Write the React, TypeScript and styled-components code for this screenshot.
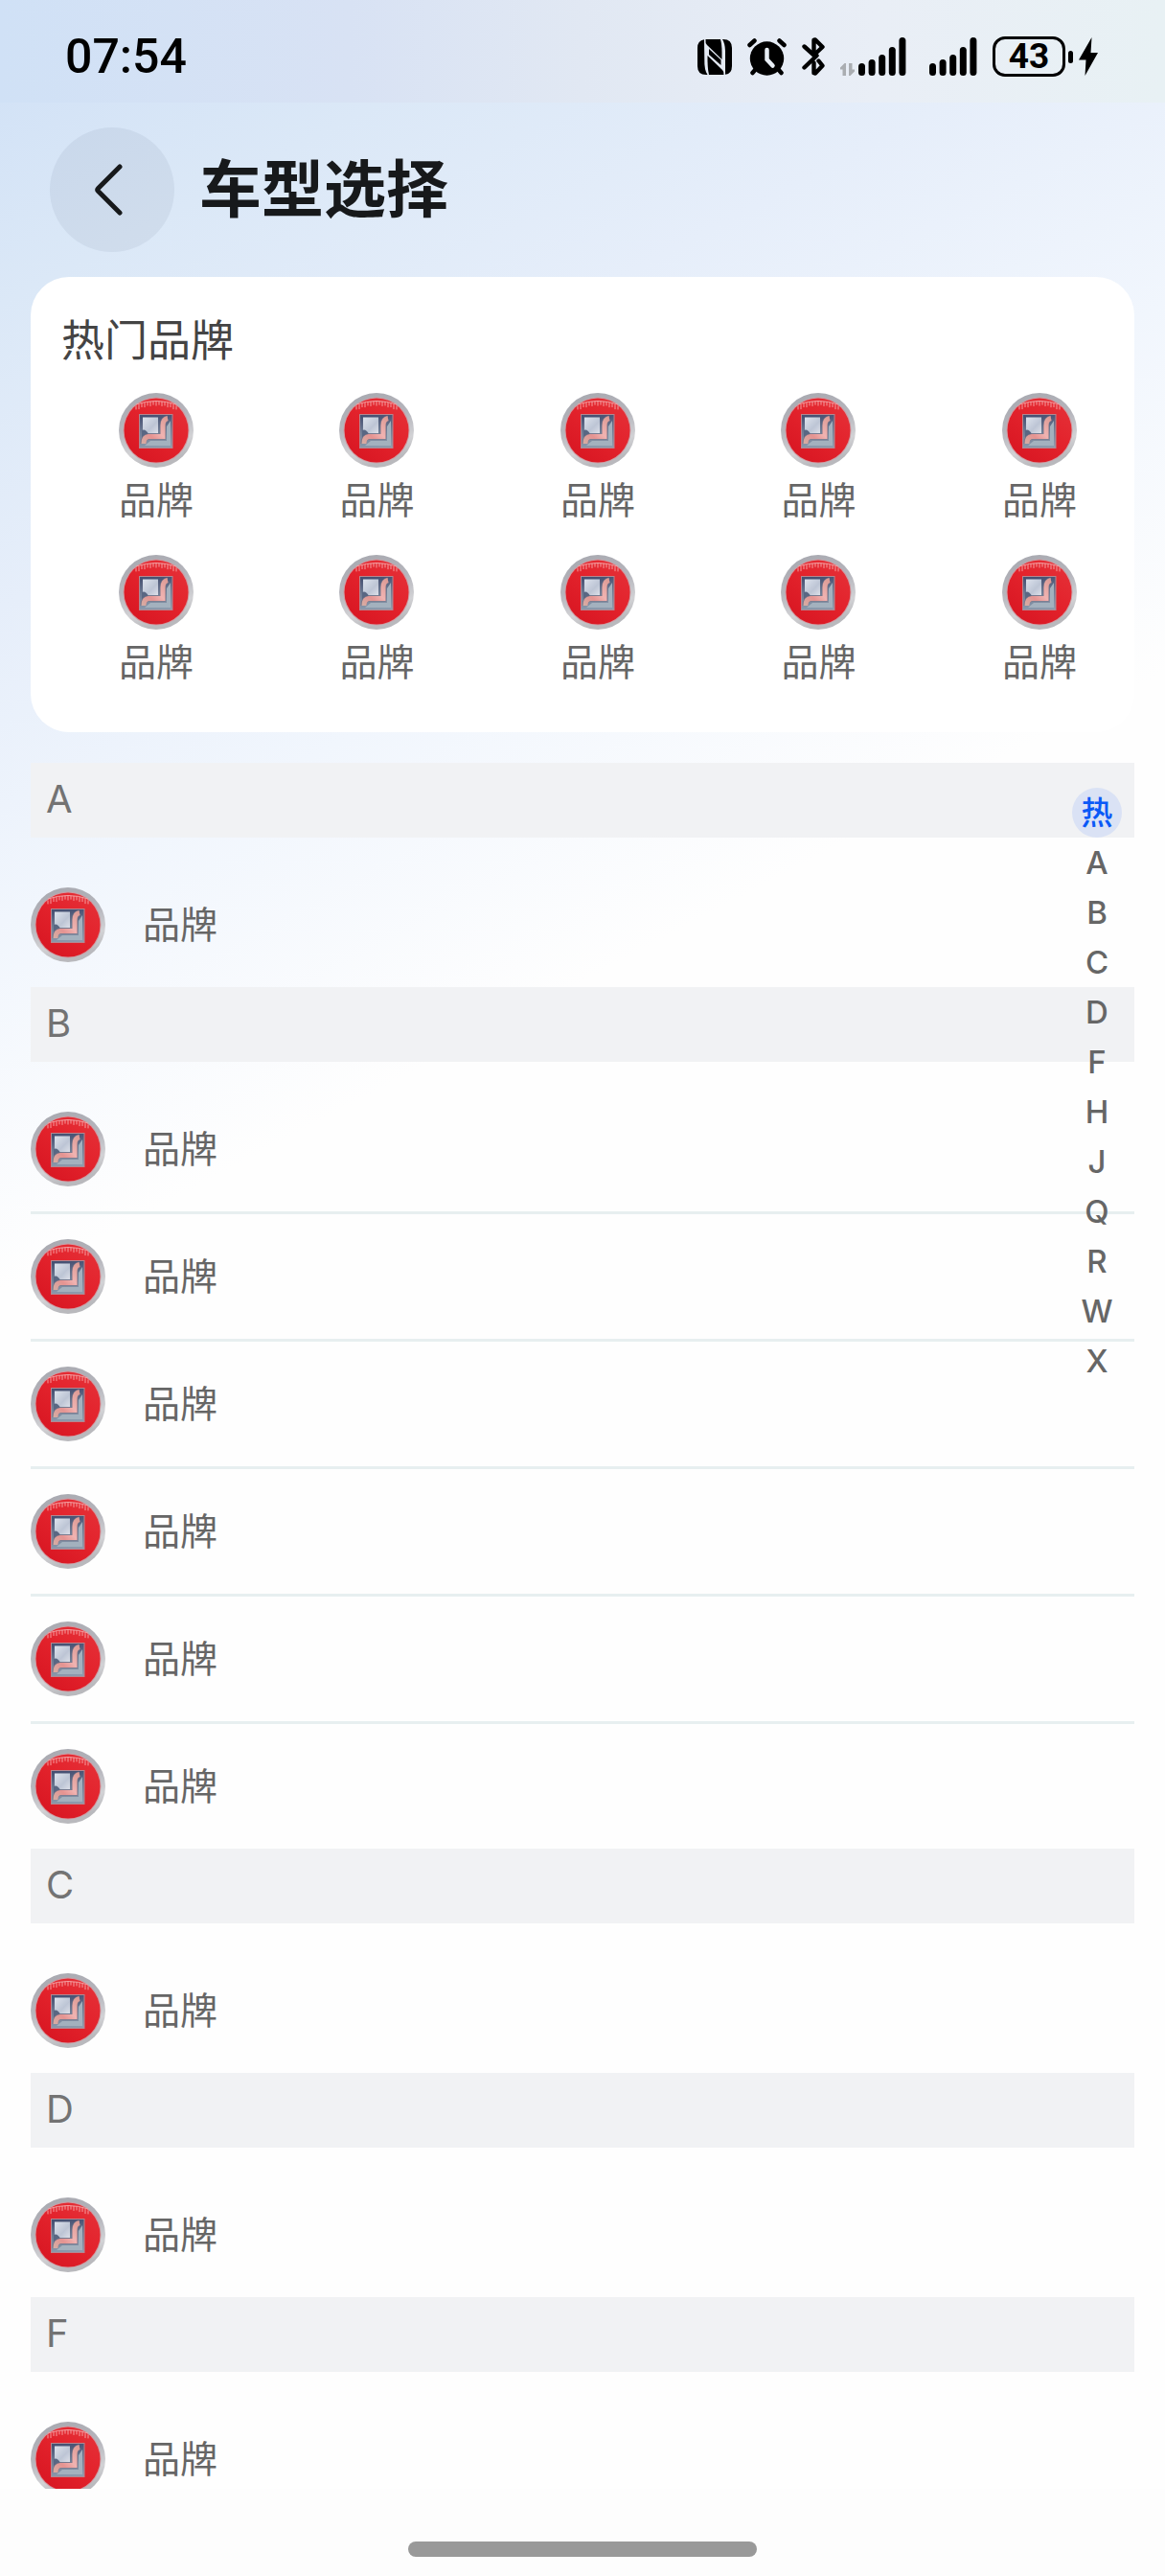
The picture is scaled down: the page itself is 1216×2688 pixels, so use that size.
import React, { useId } from "react";
import styled, { createGlobalStyle } from "styled-components";

const sans = `"Noto Sans CJK SC", "Noto Sans", sans-serif`;
const latin = `Inter, "Noto Sans CJK SC", sans-serif`;
const digits = `Roboto, "Noto Sans CJK SC", sans-serif`;

const GlobalStyle = createGlobalStyle`
  *, *::before, *::after { box-sizing: border-box; }
  body { margin: 0; font-family: ${sans}; background: #fefefe; }
  button { font: inherit; color: inherit; border: 0; padding: 0; background: none; cursor: pointer; }
  h1, h2, ul { margin: 0; padding: 0; font-weight: 400; }
  ul { list-style: none; }
  svg { display: block; flex: none; }
`;

const Screen = styled.div`
  display: flex;
  flex-direction: column;
  height: 100vh;
  overflow: hidden;
  background: linear-gradient(152deg, #cfe0f6 0, #dbe8f7 280px, #e6eefa 560px, #f1f6fd 850px, #fefefe 1190px);
`;

const StatusBar = styled.div`
  flex: none;
  display: flex;
  align-items: center;
  justify-content: space-between;
  height: 107px;
  padding: 11px 70px 0 68px;
  color: #000;
  background: linear-gradient(90deg, #d0e1f6 0, #d8e2f4 30%, #e1e8f3 50%, #e9eef6 75%, #e8f1f4 100%);
`;

const Clock = styled.time`
  font-family: ${digits};
  font-size: 50px;
  line-height: 60px;
  font-weight: 500;
`;

const StatusGroup = styled.div<{ $gap: number }>`
  display: flex;
  align-items: center;
  gap: ${(p) => p.$gap}px;
`;

const DataSlot = styled.span`
  display: flex;
  align-items: flex-end;
  height: 40px;
`;

const Battery = styled.span`
  display: flex;
  align-items: center;
  justify-content: center;
  width: 76px;
  height: 42px;
  border: 3px solid #000;
  border-radius: 13px;
  font-family: ${digits};
  font-size: 37px;
  line-height: 36px;
  font-weight: 700;
`;

const BatteryTip = styled.span`
  width: 5px;
  height: 13px;
  margin-right: 3px;
  border-radius: 3px;
  background: #000;
`;

const TitleBar = styled.header`
  flex: none;
  display: flex;
  align-items: center;
  gap: 26px;
  height: 182px;
  padding: 0 52px;
`;

const BackButton = styled.button`
  display: grid;
  place-items: center;
  width: 130px;
  height: 130px;
  border-radius: 50%;
  background: rgba(24, 36, 60, 0.06);
`;

const Title = styled.h1`
  padding-bottom: 10px;
  font-size: 65px;
  line-height: 80px;
  font-weight: 700;
  color: #17191b;
`;

const HotCard = styled.section`
  flex: none;
  margin: 0 32px;
  padding: 37px 0 47px;
  border-radius: 40px;
  background: #fff;
`;

const HotTitle = styled.h2`
  padding: 0 32px 6px;
  font-size: 45px;
  line-height: 54px;
  color: #444;
`;

const HotGrid = styled.ul`
  display: grid;
  grid-template-columns: repeat(5, max-content);
  justify-content: space-between;
  row-gap: 31px;
  padding: 24px 60px 0 92px;
`;

const HotBrand = styled.button`
  display: flex;
  flex-direction: column;
  align-items: center;
  gap: 8px;
`;

const BrandName = styled.span`
  padding-bottom: 6px;
  font-size: 39px;
  line-height: 46px;
  color: #666;
`;

const ListArea = styled.main`
  position: relative;
  flex: 1;
  min-height: 0;
  margin-top: 32px;
`;

const Scroller = styled.div`
  height: 100%;
  padding: 0 32px;
  overflow-y: auto;
  scrollbar-width: none;
`;

const LetterHeading = styled.h2`
  height: 78px;
  padding: 0 16px;
  font-family: ${latin};
  font-size: 40px;
  line-height: 76px;
  color: #737373;
  background: #f1f2f4;
`;

const BrandList = styled.ul`
  padding-top: 26px;

  li + li {
    border-top: 3px solid #e7eff0;
  }
`;

const BrandRow = styled.button`
  display: flex;
  align-items: center;
  gap: 39px;
  width: 100%;
  height: 130px;
  text-align: left;
`;

const IndexBar = styled.nav`
  position: absolute;
  top: 26px;
  right: 45px;
  display: flex;
  flex-direction: column;
`;

const IndexLink = styled.a<{ $active: boolean }>`
  width: 52px;
  height: 52px;
  border-radius: 50%;
  font-family: ${latin};
  font-size: 33px;
  line-height: 52px;
  font-weight: 500;
  text-align: center;
  text-decoration: none;
  color: ${(p) => (p.$active ? "#0a59f7" : "#666")};
  background: ${(p) => (p.$active ? "#dae2f5" : "transparent")};
`;

const GestureArea = styled.footer`
  flex: none;
  display: flex;
  justify-content: center;
  height: 91px;
  padding-top: 55px;
  background: #fdfdfd;
`;

const GestureBar = styled.span`
  width: 364px;
  height: 16px;
  border-radius: 8px;
  background: #999;
`;

function NfcIcon() {
  return (
    <svg width="36" height="37" viewBox="0 0 36 37">
      <path d="M9 0h15q1.500 5 1.500 14v7L10 6Q8 4 8.500 0Z" />
      <path d="M7 0.300Q0 1.500 0 9v19q0 9 9 9h1.500Q7 32 7.300 21Z" />
      <path d="M27 0q9 0 9 9v19q0 8-7 8.700V12Q28.700 4 26 0Z" />
      <path d="M12 37Q10.300 30 10.500 17L26 32q2 2 1.500 5Z" />
      <path d="M12 10 24.500 21.500V27L12 16Z" />
    </svg>
  );
}

function AlarmIcon() {
  return (
    <svg width="41" height="39" viewBox="0 0 41 39">
      <g fill="none" stroke="#000" strokeWidth="4.500" strokeLinecap="round">
        <path d="M2.500 7 7.500 2.500M38.500 7 33.500 2.500M9 32 5.500 36M32 32l3.500 4" />
      </g>
      <circle cx="20.500" cy="21" r="17.700" />
      <path d="M20.500 12v10l6 6.500" fill="none" stroke="#e8eef5" strokeWidth="4.500" strokeLinecap="round" />
    </svg>
  );
}

function BluetoothIcon() {
  return (
    <svg width="24" height="40" viewBox="0 0 24 40">
      <g fill="none" stroke="#000" strokeWidth="4.400" strokeLinecap="round" strokeLinejoin="round">
        <path d="M2.500 9.500 12.500 18.500 21.500 10 14 2.500 12.500 2.700V18.500" />
        <path d="M2.500 31.500 15.500 19" />
        <path d="M17.500 24.500 21.500 29.500 14 37.500 12.500 37.200V26.500" />
      </g>
    </svg>
  );
}

function DataIcon() {
  return (
    <svg width="15" height="13" viewBox="0 0 15 13">
      <path d="M6 13V0H4.500L0 4.500V6.500H2.500V13ZM9 0V13h1.500L15 8.500V6.500H12.500V0Z" fill="#aaadb1" />
    </svg>
  );
}

function SignalIcon() {
  return (
    <svg width="50" height="40" viewBox="0 0 50 40">
      {[13, 17, 22, 30, 40].map((h, i) => (
        <rect key={h} x={i * 10.6} y={40 - h} width="7" height={h} rx="3.500" />
      ))}
    </svg>
  );
}

function BoltIcon() {
  return (
    <svg width="20" height="40" viewBox="0 0 20 40">
      <path d="M13.500 0 0 23.500h7.500L6.500 40 20 16h-7.500Z" />
    </svg>
  );
}

function BackIcon() {
  return (
    <svg width="36" height="54" viewBox="0 0 36 54">
      <path
        d="M26 3 3.500 25.500q-1.500 1.500 0 3L26 51"
        fill="none"
        stroke="#17191b"
        strokeWidth="5"
        strokeLinecap="round"
        strokeLinejoin="round"
      />
    </svg>
  );
}

function BrandLogo() {
  const id = useId();
  const ticks = Array.from({ length: 15 }, (_, i) => i - 7);
  return (
    <svg width="78" height="78" viewBox="0 0 78 78" aria-hidden="true">
      <defs>
        <linearGradient id={id + "ring"} x1="0" y1="0" x2="0.300" y2="1">
          <stop offset="0" stopColor="#a6a7ae" />
          <stop offset="0.500" stopColor="#b6b6bd" />
          <stop offset="0.800" stopColor="#d2d2d5" />
          <stop offset="1" stopColor="#b9b9bd" />
        </linearGradient>
        <linearGradient id={id + "red"} x1="1" y1="0" x2="0.200" y2="1">
          <stop offset="0" stopColor="#e5333a" />
          <stop offset="0.500" stopColor="#e3232c" />
          <stop offset="1" stopColor="#d81622" />
        </linearGradient>
        <linearGradient id={id + "frame"} x1="0.500" y1="0" x2="0.600" y2="1">
          <stop offset="0" stopColor="#465072" />
          <stop offset="0.450" stopColor="#6d7a92" />
          <stop offset="1" stopColor="#8d9bad" />
        </linearGradient>
        <linearGradient id={id + "glass"} x1="0" y1="0" x2="1" y2="1">
          <stop offset="0" stopColor="#dde3ed" />
          <stop offset="0.600" stopColor="#bdc5d5" />
          <stop offset="1" stopColor="#dcdfe8" />
        </linearGradient>
        <linearGradient id={id + "seat"} x1="1" y1="0" x2="0" y2="1">
          <stop offset="0" stopColor="#dc9a94" />
          <stop offset="0.450" stopColor="#f0b3b1" />
          <stop offset="0.700" stopColor="#e59391" />
          <stop offset="1" stopColor="#d6aca3" />
        </linearGradient>
      </defs>
      <circle cx="39" cy="39" r="39" fill={`url(#${id}ring)`} />
      <circle cx="39" cy="39" r="34.500" fill="#cf9aa1" />
      <circle cx="39" cy="39" r="33.500" fill={`url(#${id}red)`} />
      <path d="M18 12Q39 5 60 12" fill="none" stroke="#f2a0a2" strokeWidth="1" />
      <g stroke="#f7a9aa" strokeWidth="0.900">
        {ticks.map((t) => (
          <path key={t} d={`M${39 + t * 3} ${8.5 + t * t * 0.1}v${t % 2 ? 4 : 5}`} />
        ))}
      </g>
      <rect x="21" y="22" width="35.500" height="36" fill="#b5868f" />
      <rect x="22" y="23" width="33.500" height="34" fill={`url(#${id}frame)`} />
      <path d="M50 35 54 29V55H27L33 50H50Z" fill="#a3b1be" />
      <path d="M25 25.500H41V42H30L25 39Z" fill={`url(#${id}glass)`} />
      <path d="M24 39q4-2 7 4l-7 4Z" fill="#596783" />
      <path
        d="M51 26.500Q46 27.500 46 34V45.500H31Q25.500 46 25.500 53"
        fill="none"
        stroke="#7d7486"
        strokeWidth="6"
      />
      <path
        d="M51 26.500Q46 27.500 46 34V45.500H31Q26 46 26 53"
        fill="none"
        stroke={`url(#${id}seat)`}
        strokeWidth="5"
      />
    </svg>
  );
}

const hotBrands = Array.from({ length: 10 }, () => "品牌");

const sections = [
  { letter: "A", brands: ["品牌"] },
  { letter: "B", brands: ["品牌", "品牌", "品牌", "品牌", "品牌", "品牌"] },
  { letter: "C", brands: ["品牌"] },
  { letter: "D", brands: ["品牌"] },
  { letter: "F", brands: ["品牌"] },
];

const indexLetters = ["热", "A", "B", "C", "D", "F", "H", "J", "Q", "R", "W", "X"];

export default function App() {
  return (
    <Screen>
      <GlobalStyle />
      <StatusBar>
        <Clock>07:54</Clock>
        <StatusGroup $gap={16}>
          <NfcIcon />
          <AlarmIcon />
          <BluetoothIcon />
          <StatusGroup $gap={24}>
            <StatusGroup $gap={4}>
              <DataSlot>
                <DataIcon />
              </DataSlot>
              <SignalIcon />
            </StatusGroup>
            <SignalIcon />
          </StatusGroup>
          <StatusGroup $gap={3}>
            <Battery>43</Battery>
            <BatteryTip />
            <BoltIcon />
          </StatusGroup>
        </StatusGroup>
      </StatusBar>

      <TitleBar>
        <BackButton type="button" aria-label="返回">
          <BackIcon />
        </BackButton>
        <Title>车型选择</Title>
      </TitleBar>

      <HotCard>
        <HotTitle>热门品牌</HotTitle>
        <HotGrid>
          {hotBrands.map((name, i) => (
            <li key={i}>
              <HotBrand type="button">
                <BrandLogo />
                <BrandName>{name}</BrandName>
              </HotBrand>
            </li>
          ))}
        </HotGrid>
      </HotCard>

      <ListArea>
        <Scroller>
          {sections.map(({ letter, brands }) => (
            <section key={letter} id={letter}>
              <LetterHeading>{letter}</LetterHeading>
              <BrandList>
                {brands.map((name, i) => (
                  <li key={i}>
                    <BrandRow type="button">
                      <BrandLogo />
                      <BrandName>{name}</BrandName>
                    </BrandRow>
                  </li>
                ))}
              </BrandList>
            </section>
          ))}
        </Scroller>
        <IndexBar>
          {indexLetters.map((letter, i) => (
            <IndexLink key={letter} href={`#${letter}`} $active={i === 0}>
              {letter}
            </IndexLink>
          ))}
        </IndexBar>
      </ListArea>

      <GestureArea>
        <GestureBar />
      </GestureArea>
    </Screen>
  );
}
